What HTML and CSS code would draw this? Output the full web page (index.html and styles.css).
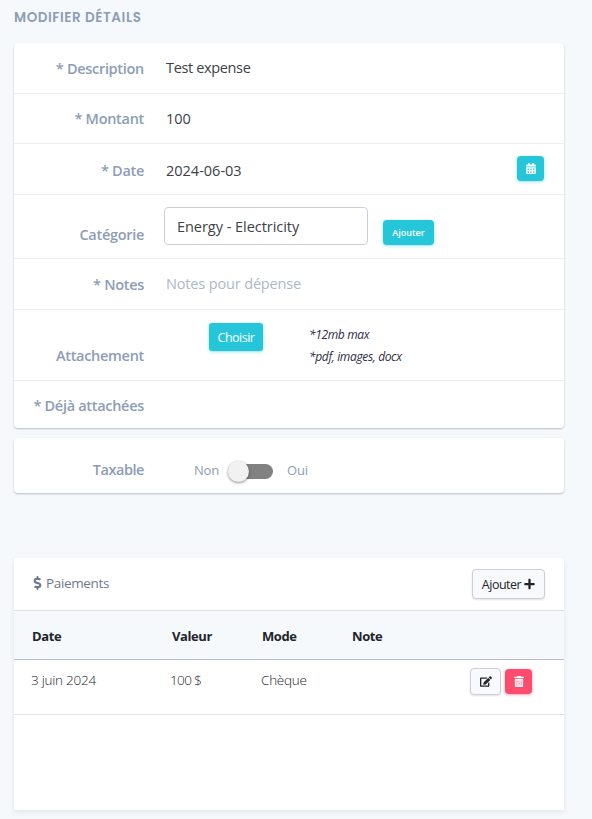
FILE: index.html
```html
<!DOCTYPE html>
<html lang="fr">
<head>
    <meta charset="UTF-8">
    <meta name="viewport" content="width=device-width, initial-scale=1.0">
    <title>Modifier dépense</title>
    <link rel="stylesheet" href="styles.css">
</head>
<body>
    <h1 class="page-title">Modifier détails</h1>

    <form class="card details">
        <div class="row">
            <label class="label">* Description</label>
            <span class="value">Test expense</span>
        </div>
        <div class="row row-amount">
            <label class="label">* Montant</label>
            <span class="value">100</span>
        </div>
        <div class="row row-date">
            <label class="label">* Date</label>
            <span class="value date">2024-06-03</span>
            <button type="button" class="btn btn-info btn-icon calendar">
                <svg width="10" height="11" viewBox="0 0 448 512"><path d="M0 464c0 26.5 21.5 48 48 48h352c26.5 0 48-21.5 48-48V192H0v272zm320-196c0-6.6 5.4-12 12-12h40c6.6 0 12 5.4 12 12v40c0 6.6-5.4 12-12 12h-40c-6.6 0-12-5.4-12-12v-40zm0 128c0-6.6 5.4-12 12-12h40c6.6 0 12 5.4 12 12v40c0 6.6-5.4 12-12 12h-40c-6.6 0-12-5.4-12-12v-40zM192 268c0-6.6 5.4-12 12-12h40c6.6 0 12 5.4 12 12v40c0 6.6-5.4 12-12 12h-40c-6.6 0-12-5.4-12-12v-40zm0 128c0-6.6 5.4-12 12-12h40c6.6 0 12 5.4 12 12v40c0 6.6-5.4 12-12 12h-40c-6.6 0-12-5.4-12-12v-40zM64 268c0-6.6 5.4-12 12-12h40c6.6 0 12 5.4 12 12v40c0 6.6-5.4 12-12 12H76c-6.6 0-12-5.4-12-12v-40zm0 128c0-6.6 5.4-12 12-12h40c6.6 0 12 5.4 12 12v40c0 6.6-5.4 12-12 12H76c-6.6 0-12-5.4-12-12v-40zM400 64h-48V16c0-8.8-7.2-16-16-16h-32c-8.8 0-16 7.2-16 16v48H160V16c0-8.8-7.2-16-16-16h-32c-8.8 0-16 7.2-16 16v48H48C21.5 64 0 85.5 0 112v48h448v-48c0-26.5-21.5-48-48-48z"/></svg>
            </button>
        </div>
        <div class="row row-category">
            <label class="label">Catégorie</label>
            <div class="select">Energy - Electricity</div>
            <button type="button" class="btn btn-info btn-xs">Ajouter</button>
        </div>
        <div class="row">
            <label class="label">* Notes</label>
            <span class="value placeholder">Notes pour dépense</span>
        </div>
        <div class="row row-file">
            <label class="label">Attachement</label>
            <button type="button" class="btn btn-info btn-choose">Choisir</button>
            <div class="hint">
                <p>*12mb max</p>
                <p>*pdf, images, docx</p>
            </div>
        </div>
        <div class="row row-attached">
            <label class="label">* Déjà attachées</label>
        </div>
    </form>

    <div class="card tax">
        <label class="label">Taxable</label>
        <span class="no">Non</span>
        <span class="switch"><span class="knob"></span></span>
        <span class="yes">Oui</span>
    </div>

    <div class="card payments">
        <div class="payments-header">
            <svg class="dollar" width="9" height="14" viewBox="0 0 288 512"><path d="M209.2 233.4l-108-31.6C88.7 198.2 80 186.5 80 173.5c0-16.3 13.2-29.5 29.5-29.5h66.3c12.2 0 24.2 3.7 34.2 10.5 6.1 4.1 14.3 3.1 19.5-2l34.8-34c7.1-6.9 6.1-18.4-1.8-24.5C238 74.8 207.4 64.1 176 64V16c0-8.8-7.2-16-16-16h-32c-8.8 0-16 7.2-16 16v48h-2.5C45.8 64-5.4 118.7.5 183.6c4.2 46.1 39.4 83.6 83.8 96.6l102.5 30c12.5 3.7 21.2 15.3 21.2 28.3 0 16.3-13.2 29.5-29.5 29.5h-66.3C100 368 88 364.3 78 357.5c-6.1-4.1-14.3-3.1-19.5 2l-34.8 34c-7.1 6.9-6.1 18.4 1.8 24.5 24.5 19.2 55.1 29.9 86.5 30v48c0 8.8 7.2 16 16 16h32c8.8 0 16-7.2 16-16v-48.2c46.6-.9 90.3-28.6 105.7-72.7 21.5-61.6-14.6-124.8-72.5-141.7z"/></svg>
            <span class="payments-title">Paiements</span>
            <button type="button" class="btn btn-light btn-add"><span>Ajouter</span>
                <svg width="11" height="12" viewBox="0 0 448 512"><path d="M416 208H272V64c0-17.7-14.3-32-32-32h-32c-17.7 0-32 14.3-32 32v144H32c-17.7 0-32 14.3-32 32v32c0 17.7 14.3 32 32 32h144v144c0 17.7 14.3 32 32 32h32c17.7 0 32-14.3 32-32V304h144c17.7 0 32-14.3 32-32v-32c0-17.7-14.3-32-32-32z"/></svg>
            </button>
        </div>
        <div class="grid grid-head">
            <span>Date</span>
            <span>Valeur</span>
            <span>Mode</span>
            <span>Note</span>
        </div>
        <div class="grid grid-row">
            <span>3 juin 2024</span>
            <span class="cell-value">100 $</span>
            <span>Chèque</span>
            <span></span>
            <div class="actions">
                <button type="button" class="btn btn-light btn-edit">
                    <svg width="12" height="11" viewBox="0 0 576 512"><path d="M402.6 83.2l90.2 90.2c3.8 3.8 3.8 10 0 13.8L274.4 405.6l-92.8 10.3c-12.4 1.4-22.9-9.1-21.5-21.5l10.3-92.8L388.8 83.2c3.8-3.8 10-3.8 13.8 0zm162-22.9l-48.8-48.8c-15.2-15.2-39.9-15.2-55.2 0l-35.4 35.4c-3.8 3.8-3.8 10 0 13.8l90.2 90.2c3.8 3.8 10 3.8 13.8 0l35.4-35.4c15.2-15.3 15.2-40 0-55.2zM384 346.2V448H64V128h229.8c3.2 0 6.2-1.3 8.5-3.5l40-40c7.6-7.6 2.2-20.5-8.5-20.5H48C21.5 64 0 85.5 0 112v352c0 26.5 21.5 48 48 48h352c26.5 0 48-21.5 48-48V306.2c0-10.7-12.9-16-20.5-8.5l-40 40c-2.2 2.3-3.5 5.3-3.5 8.5z"/></svg>
                </button>
                <button type="button" class="btn btn-danger btn-icon">
                    <svg width="10" height="11" viewBox="0 0 448 512"><path d="M32 464a48 48 0 0 0 48 48h288a48 48 0 0 0 48-48V128H32zm272-256a16 16 0 0 1 32 0v224a16 16 0 0 1-32 0zm-96 0a16 16 0 0 1 32 0v224a16 16 0 0 1-32 0zm-96 0a16 16 0 0 1 32 0v224a16 16 0 0 1-32 0zM432 32H312l-9.4-18.7A24 24 0 0 0 281.1 0H166.8a23.7 23.7 0 0 0-21.4 13.3L136 32H16A16 16 0 0 0 0 48v32a16 16 0 0 0 16 16h416a16 16 0 0 0 16-16V48a16 16 0 0 0-16-16z"/></svg>
                </button>
            </div>
        </div>
    </div>
</body>
</html>
```

FILE: styles.css
```css
* {
    margin: 0;
    padding: 0;
    box-sizing: border-box;
}

body {
    height: 819px;
    padding: 9px 28px 0 14px;
    overflow: hidden;
    background: #f5f9fc;
    font-family: "Open Sans", "Noto Sans", sans-serif;
    font-size: 14px;
    color: #3b4248;
}

.page-title {
    height: 34px;
    font-family: Poppins, Inter, sans-serif;
    font-size: 13.5px;
    line-height: 17px;
    font-weight: 600;
    letter-spacing: 0.55px;
    text-transform: uppercase;
    white-space: nowrap;
    color: #8d9db5;
}

.card {
    background: #fff;
    border-radius: 4px;
    box-shadow: 0 1px 2px rgba(0, 0, 0, 0.24);
}

.row {
    display: flex;
    align-items: center;
    height: 51px;
    border-bottom: 1px solid #ebedef;
}

.row-amount {
    height: 50px;
}

.row-date .label,
.row-date .value {
    padding-top: 3px;
}

.label {
    width: 130px;
    padding-top: 2px;
    text-align: right;
    font-size: 14.5px;
    line-height: 20px;
    font-weight: 600;
    letter-spacing: -0.3px;
    color: #8d9db5;
}

.row-amount .label {
    padding-top: 1px;
}

.value {
    margin-left: 22px;
    font-size: 14.5px;
    line-height: 20px;
    letter-spacing: -0.35px;
}

.row-amount .value,
.value.date {
    letter-spacing: 0;
}

.value.placeholder {
    letter-spacing: -0.15px;
    color: #acb8c8;
}

/* buttons */
.btn {
    display: flex;
    align-items: center;
    justify-content: center;
    border: 0;
    border-radius: 4px;
    font-family: inherit;
    color: #fff;
}

.btn svg {
    fill: currentColor;
}

.btn-info {
    background: #26c6da;
    box-shadow: 0 1px 3px rgba(38, 198, 218, 0.5);
}

.btn-danger {
    background: #ff4b6e;
    box-shadow: 0 1px 3px rgba(255, 75, 110, 0.5);
}

.btn-light {
    background: #f8f9fc;
    border: 1px solid #cdcfd8;
    box-shadow: 0 1px 2px rgba(0, 0, 0, 0.12);
    color: #212529;
}

.btn-icon {
    width: 27px;
    height: 25px;
}

.calendar {
    margin: 0 20px 2px auto;
}

.row-category {
    height: 64px;
}

.row-category .label {
    padding-top: 16px;
}

.select {
    width: 204px;
    height: 38px;
    margin: 0 15px 2px 20px;
    padding: 0 12px;
    border: 1px solid #cbd0d8;
    border-radius: 4px;
    font-size: 14.5px;
    line-height: 37px;
    letter-spacing: -0.04px;
}

.btn-xs {
    width: 51px;
    height: 25px;
    margin-top: 11px;
    font-size: 9px;
    font-weight: 600;
}

.row-file {
    align-items: flex-start;
    height: 71px;
}

.row-file .label {
    padding-top: 36px;
}

.btn-choose {
    width: 54px;
    height: 28px;
    margin: 13px 0 0 65px;
    padding-top: 1px;
    border-radius: 3px;
    font-size: 12.5px;
    letter-spacing: -0.5px;
}

.hint {
    margin: 14px 0 0 46px;
    font-size: 12px;
    font-style: italic;
    line-height: 22px;
    letter-spacing: -0.35px;
    color: #2c2c48;
}

.row-attached {
    height: 47px;
    border: 0;
}

/* taxable switch */
.tax {
    display: flex;
    align-items: center;
    height: 55px;
    margin-top: 10px;
    padding-top: 8px;
    font-size: 13px;
    letter-spacing: -0.2px;
    color: #8d9db5;
}

.tax .label {
    padding-top: 0;
    letter-spacing: -0.45px;
}

.no {
    width: 37px;
    margin-left: 50px;
}

.switch {
    display: flex;
    align-items: center;
    width: 42px;
    height: 15px;
    margin-top: 4px;
    border-radius: 8px;
    background: #818181;
}

.knob {
    width: 21px;
    height: 21px;
    margin-left: -3px;
    border-radius: 50%;
    background: #f1f1f1;
    box-shadow: 0 1px 3px rgba(0, 0, 0, 0.45);
}

.yes {
    margin-left: 14px;
}

/* payments */
.payments {
    height: 252px;
    margin-top: 65px;
    border-radius: 3px 3px 0 0;
    box-shadow: 0 2px 5px rgba(50, 70, 90, 0.1);
}

.payments-header {
    display: flex;
    align-items: center;
    height: 53px;
    padding: 0 19px;
    border-bottom: 1px solid #dcdfe6;
    color: #6e7991;
}

.dollar {
    margin: 0 4px 2px 0;
    fill: currentColor;
}

.payments-title {
    margin-bottom: 2px;
    font-size: 13.5px;
    letter-spacing: -0.35px;
}

.btn-add {
    gap: 3px;
    width: 73px;
    height: 30px;
    margin-left: auto;
    font-size: 12.5px;
    letter-spacing: -0.5px;
}

.grid {
    display: grid;
    grid-template-columns: 140px 90px 90px 118px 1fr;
    padding-left: 18px;
}

.grid-head {
    height: 49px;
    padding-top: 2px;
    align-items: center;
    border-bottom: 1px solid #b9bfd0;
    background: #f5f9fc;
    font-size: 13px;
    font-weight: 700;
    letter-spacing: -0.4px;
    color: #212529;
}

.grid-row {
    height: 55px;
    padding: 8px 0 0 17px;
    border-bottom: 1px solid #dde2e8;
    font-size: 13.5px;
    font-weight: 300;
    line-height: 24px;
    letter-spacing: -0.25px;
    color: #212529;
}

.cell-value {
    margin-left: -1px;
    letter-spacing: -0.6px;
}

.actions {
    display: flex;
    align-items: center;
    gap: 4px;
    height: 27px;
    margin-left: 1px;
}

.btn-edit {
    width: 31px;
    height: 27px;
}
```
